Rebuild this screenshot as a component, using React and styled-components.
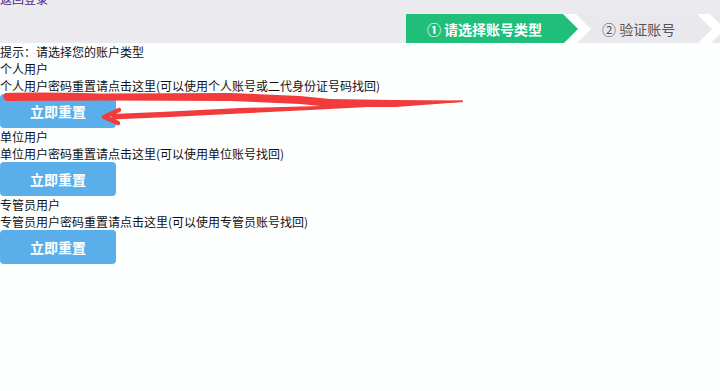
import React from "react";
import styled, { createGlobalStyle } from "styled-components";

const Global = createGlobalStyle`
  html, body { margin: 0; padding: 0; background: #fdfefe; }
  body { font-family: "Microsoft YaHei", "Noto Sans CJK SC", "Noto Sans", sans-serif; overflow: hidden; }
  * { box-sizing: border-box; }
`;

const Page = styled.div`
  position: relative;
  width: 720px;
  height: 391px;
  background: #fdfefe;
`;

const Header = styled.div`
  height: 43px;
  background: #ebebef;
  display: flex;
  justify-content: space-between;
  align-items: flex-start;
  overflow: hidden;
`;

const BackLink = styled.a`
  display: block;
  margin-top: -8px;
  font-size: 12px;
  line-height: 14px;
  color: #4e2a86;
  text-decoration: none;
`;

const StepBar = styled.div`
  margin-top: 14px;
  width: 314px;
  height: 30px;
  background: #ffffff;
  display: flex;
  overflow: hidden;
  flex-shrink: 0;
`;

const Step = styled.div`
  flex-shrink: 0;
  width: ${(p) => p.$w}px;
  margin-left: ${(p) => (p.$first ? 0 : -2)}px;
  height: 30px;
  padding-left: ${(p) => p.$pl}px;
  padding-right: 15px;
  display: flex;
  align-items: center;
  justify-content: ${(p) => (p.$first ? "center" : "flex-start")};
  font-size: 14px;
  white-space: nowrap;
  font-weight: ${(p) => (p.$active ? 700 : 400)};
  color: ${(p) => (p.$active ? "#ffffff" : "#555555")};
  background: ${(p) => (p.$active ? "#20bf79" : "#e9e9ed")};
  clip-path: ${(p) =>
    p.$first
      ? "polygon(0 0, calc(100% - 15px) 0, 100% 50%, calc(100% - 15px) 100%, 0 100%)"
      : "polygon(0 0, calc(100% - 15px) 0, 100% 50%, calc(100% - 15px) 100%, 0 100%, 15px 50%)"};
`;

const Content = styled.div`
  font-size: 12px;
  line-height: 17px;
  color: #111111;
`;

const Line = styled.div`
  height: 17px;
  white-space: nowrap;
`;

const ResetButton = styled.button`
  display: block;
  width: 116px;
  height: 34px;
  border: none;
  border-radius: 4px;
  background: #5aaeea;
  color: #ffffff;
  font-family: inherit;
  font-size: 14px;
  font-weight: 700;
  padding: 0;
  cursor: pointer;
`;

const Annotation = styled.svg`
  position: absolute;
  left: 0;
  top: 0;
  pointer-events: none;
`;

const sections = [
  { title: "个人用户", desc: "个人用户密码重置请点击这里(可以使用个人账号或二代身份证号码找回)" },
  { title: "单位用户", desc: "单位用户密码重置请点击这里(可以使用单位账号找回)" },
  { title: "专管员用户", desc: "专管员用户密码重置请点击这里(可以使用专管员账号找回)" },
];

export default function App() {
  return (
    <Page>
      <Global />
      <Header>
        <BackLink href="#">返回登录</BackLink>
        <StepBar>
          <Step $first $active $w={172} $pl={0}>① 请选择账号类型</Step>
          <Step $w={136} $pl={26}>② 验证账号</Step>
          <Step $w={140} $pl={26} />
        </StepBar>
      </Header>
      <Content>
        <Line>提示：请选择您的账户类型</Line>
        {sections.map((s) => (
          <div key={s.title}>
            <Line>{s.title}</Line>
            <Line>{s.desc}</Line>
            <ResetButton>立即重置</ResetButton>
          </div>
        ))}
      </Content>
      <Annotation width="720" height="391" viewBox="0 0 720 391">
        <path
          fill="#f23b3b"
          d="M5 93 Q40 92 100 93.5 L230 93 L300 96 L330 99 L393 100 L462 100.5 L462 102 L396 107 L330 107 L300 104 L230 101 L100 100.5 L6 101 Q1 97 5 93 Z"
        />
        <path
          fill="#f23b3b"
          d="M463 100.5 L320 106 L240 108 L160 112 L112 114 L112 119.5 L170 117 L240 113.5 L320 109.5 L463 102 Z"
        />
        <path
          d="M119 110 L104 117 L118 123"
          fill="none"
          stroke="#f23b3b"
          strokeWidth="4.5"
          strokeLinecap="round"
          strokeLinejoin="round"
        />
      </Annotation>
    </Page>
  );
}
